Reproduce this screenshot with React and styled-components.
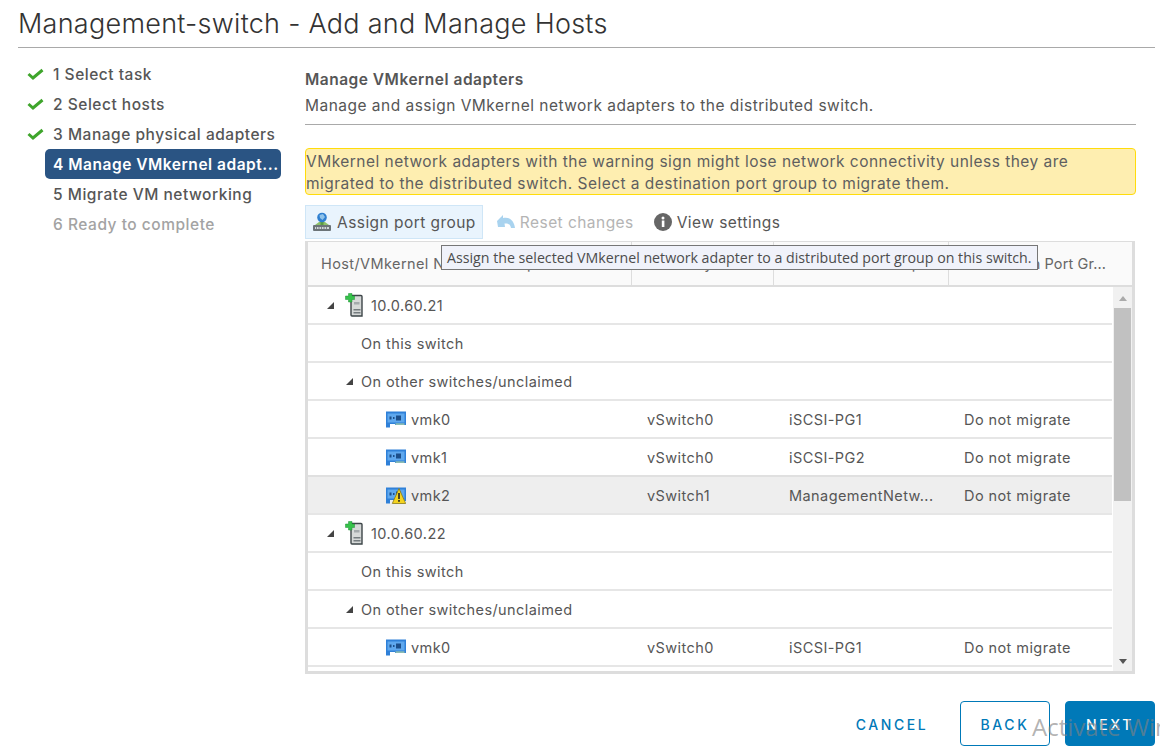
import React from "react";
import styled, { createGlobalStyle } from "styled-components";

const GlobalStyle = createGlobalStyle`
  html, body { margin: 0; padding: 0; background: #fff; }
  body { font-family: Inter, "Open Sans", sans-serif; color: #565656; }
  * { box-sizing: border-box; }
`;

const steps = [
  { label: "1 Select task", done: true },
  { label: "2 Select hosts", done: true },
  { label: "3 Manage physical adapters", done: true },
  { label: "4 Manage VMkernel adapt...", active: true },
  { label: "5 Migrate VM networking" },
  { label: "6 Ready to complete", disabled: true },
];

const rows = [
  { kind: "host", name: "10.0.60.21" },
  { kind: "group", name: "On this switch" },
  { kind: "group", name: "On other switches/unclaimed", open: true },
  { kind: "vmk", name: "vmk0", sw: "vSwitch0", pg: "iSCSI-PG1", dest: "Do not migrate" },
  { kind: "vmk", name: "vmk1", sw: "vSwitch0", pg: "iSCSI-PG2", dest: "Do not migrate" },
  { kind: "vmk", name: "vmk2", sw: "vSwitch1", pg: "ManagementNetw...", dest: "Do not migrate", warn: true },
  { kind: "host", name: "10.0.60.22" },
  { kind: "group", name: "On this switch" },
  { kind: "group", name: "On other switches/unclaimed", open: true },
  { kind: "vmk", name: "vmk0", sw: "vSwitch0", pg: "iSCSI-PG1", dest: "Do not migrate" },
];

const Page = styled.div`
  position: relative;
  width: 1160px;
  height: 752px;
  overflow: hidden;
  padding: 0 5px 0 18px;
`;

const Header = styled.h1`
  height: 48px;
  margin: 0;
  padding-top: 7px;
  border-bottom: 1px solid #a9a9a9;
  font-size: 27px;
  line-height: 34px;
  font-weight: 300;
  letter-spacing: 0.27px;
  color: #333;
`;

const Body = styled.div`
  display: flex;
  height: 627px;
`;

const Sidebar = styled.nav`
  width: 287px;
  padding: 11px 0 0 9px;
`;

const Step = styled.div`
  display: flex;
  align-items: center;
  height: 30px;
`;

const CheckSlot = styled.span`
  display: flex;
  width: 18px;
  color: #3fa52c;
`;

const StepLabel = styled.span`
  width: 236px;
  height: 30px;
  padding-left: 8px;
  border-radius: 5px;
  font-size: 15.5px;
  line-height: 31px;
  letter-spacing: 0.52px;
  white-space: nowrap;
  color: ${(p) => (p.$active ? "#fff" : p.$disabled ? "#a3a3a3" : "#565656")};
  background: ${(p) => (p.$active ? "#2a5483" : "transparent")};
  font-weight: ${(p) => (p.$active ? 600 : 500)};
`;

const Content = styled.main`
  width: 831px;
  padding-top: 21px;
`;

const Heading = styled.h2`
  margin: 0;
  font-size: 15.5px;
  line-height: 22px;
  font-weight: 600;
  letter-spacing: 0.5px;
  color: #565656;
`;

const Intro = styled.p`
  margin: 4px 0 0;
  padding-bottom: 7px;
  border-bottom: 1px solid #a9a9a9;
  font-size: 15.5px;
  line-height: 22px;
  letter-spacing: 0.48px;
  color: #565656;
`;

const Warning = styled.div`
  margin-top: 23px;
  height: 47px;
  padding: 2px 0 0 0;
  border: 1px solid #ffdc0b;
  border-radius: 4px;
  background: #feeeb0;
  font-size: 15.5px;
  line-height: 22px;
  letter-spacing: 0.47px;
  color: #5f5f5f;
`;

const Toolbar = styled.div`
  display: flex;
  align-items: center;
  margin-top: 10px;
  height: 34px;
`;

const ToolButton = styled.div`
  display: flex;
  align-items: center;
  gap: 5px;
  height: 34px;
  padding: 0 6px;
  border: 1px solid ${(p) => (p.$hover ? "#cfe6f7" : "transparent")};
  background: ${(p) => (p.$hover ? "#e9f4fd" : "transparent")};
  font-size: 15.5px;
  letter-spacing: 0.45px;
  color: ${(p) => (p.$disabled ? "#b4b4b4" : "#565656")};
  margin-right: ${(p) => (p.$hover ? "7px" : "6px")};
`;

const Table = styled.div`
  position: relative;
  height: 433px;
  border: 1px solid #ddd;
  border-left: 3px solid #ddd;
  border-right: 3px solid #ddd;
  border-bottom: 3px solid #ddd;
  margin-top: 2px;
  margin-right: 1px;
`;

const HeaderRow = styled.div`
  display: grid;
  grid-template-columns: 324px 142px 175px 1fr;
  height: 45px;
  background: #fafafa;
  border-bottom: 2px solid #ddd;
`;

const HeaderCell = styled.div`
  padding-left: 13px;
  border-right: 1px solid #ddd;
  font-size: 14.5px;
  line-height: 43px;
  letter-spacing: 0.4px;
  color: #666;
  white-space: nowrap;
  overflow: hidden;
  &:last-child {
    border-right: 0;
    letter-spacing: 0.12px;
  }
`;

const TableBody = styled.div`
  display: flex;
  height: 384px;
`;

const Rows = styled.div`
  flex: 1;
  overflow: hidden;
  margin-right: 1px;
`;

const Row = styled.div`
  display: grid;
  grid-template-columns: 324px 142px 175px 1fr;
  align-items: center;
  height: 38px;
  border-bottom: 2px solid #e6e6e6;
  background: ${(p) => (p.$selected ? "#eee" : "#fff")};
  box-shadow: ${(p) => (p.$selected ? "0 -2px 0 #e0e0e0" : "none")};
  font-size: 14.5px;
  letter-spacing: 0.42px;
  color: #565656;
  white-space: nowrap;
`;

const NameCell = styled.div`
  display: flex;
  align-items: center;
  padding-left: ${(p) => p.$indent}px;
`;

const Cell = styled.div`
  padding-left: 15px;
`;

const Twisty = styled.span`
  width: 0;
  height: 0;
  margin-right: ${(p) => p.$gap}px;
  border-style: solid;
  border-width: 0 0 7px 7px;
  border-color: transparent transparent #444 transparent;
`;

const Scrollbar = styled.div`
  display: flex;
  flex-direction: column;
  align-items: center;
  width: 19px;
  background: #f1f1f1;
`;

const ScrollArrow = styled.span`
  width: 0;
  height: 0;
  margin: 9px 0 7px;
  border-left: 4.5px solid transparent;
  border-right: 4.5px solid transparent;
  ${(p) => (p.$down ? "border-top: 5px solid #555;" : "border-bottom: 5px solid #aaa;")}
`;

const ScrollThumb = styled.div`
  width: 17px;
  height: 193px;
  background: #c1c1c1;
`;

const ScrollGap = styled.div`
  flex: 1;
`;

const Tooltip = styled.div`
  position: absolute;
  left: 133px;
  top: 3px;
  height: 25px;
  padding: 0 5px;
  border: 1px solid #767676;
  background: #f0f2fa;
  font-family: "Open Sans", sans-serif;
  font-size: 14.2px;
  line-height: 23px;
  color: #4c4c4c;
  white-space: nowrap;
`;

const Footer = styled.footer`
  display: flex;
  justify-content: flex-end;
  align-items: center;
  gap: 15px;
  padding-top: 26px;
`;

const FooterButton = styled.button`
  width: ${(p) => p.$width}px;
  height: 45px;
  padding: 2px 0 0;
  border: 1px solid ${(p) => (p.$plain ? "transparent" : "#0079b8")};
  border-radius: 4px;
  background: ${(p) => (p.$primary ? "#0079b8" : "#fff")};
  color: ${(p) => (p.$primary ? "#fff" : "#0079b8")};
  font-family: inherit;
  font-size: 14px;
  font-weight: 500;
  letter-spacing: 2.6px;
`;

const Watermark = styled.div`
  position: absolute;
  left: 1032px;
  top: 711px;
  font-family: "Open Sans", sans-serif;
  color: rgba(130, 130, 130, 0.62);
  white-space: nowrap;
  pointer-events: none;
`;

const WatermarkTitle = styled.div`
  font-size: 24px;
  line-height: 32px;
`;

const WatermarkHint = styled.div`
  font-size: 13px;
  line-height: 18px;
  padding-left: 2px;
  margin-top: 4px;
`;

const IconSlot = styled.span`
  display: flex;
  align-items: center;
  margin-right: ${(p) => p.$gap}px;
`;

const Check = () => (
  <svg width="17" height="12" viewBox="0 0 17 12">
    <path d="M1.5 6 L6 10 L15.5 2" fill="none" stroke="currentColor" strokeWidth="3" />
  </svg>
);

const PortGroupIcon = () => (
  <svg width="20" height="20" viewBox="0 0 20 20">
    <path d="M3 13 L7 10 H13 L17 13 Z" fill="#8cc06a" />
    <rect x="8.5" y="9" width="3" height="4" fill="#5a9a45" />
    <circle cx="10" cy="5.5" r="4.8" fill="#2f7fd0" />
    <path d="M7.5 3 L11 2 L13 5 L10.5 8 L8 6 Z" fill="#8fc3ea" />
    <rect x="1" y="13" width="18" height="6" rx="1" fill="#6b7478" />
    <rect x="3" y="15" width="14" height="2" fill="#cfd5d8" />
    <path d="M4.5 15 V17 M7 15 V17 M9.5 15 V17 M12 15 V17 M14.5 15 V17" stroke="#6b7478" strokeWidth="0.8" />
  </svg>
);

const ResetIcon = () => (
  <svg width="18" height="16" viewBox="0 0 18 16">
    <path d="M0 7 L6 1 V4 C12 2.5 17 6 18 14 H14 C13.5 10.5 11 9 7.5 9.5 L8 13 H1 Z" fill="#a9d3ef" />
  </svg>
);

const InfoIcon = () => (
  <svg width="18" height="18" viewBox="0 0 18 18">
    <circle cx="9" cy="9" r="9" fill="#666" />
    <rect x="7.8" y="7.5" width="2.6" height="6.5" fill="#fff" />
    <circle cx="9" cy="5" r="1.5" fill="#fff" />
  </svg>
);

const HostIcon = () => (
  <svg width="20" height="24" viewBox="0 0 20 24">
    <path d="M6 2.5 H16 A1 1 0 0 1 17 3.5 V23 H7 A1 1 0 0 1 6 22 Z" fill="#d6d9d8" stroke="#3d4548" strokeWidth="1.4" />
    <rect x="9" y="9" width="5.5" height="2.5" fill="#a4aaac" />
    <rect x="8.5" y="16" width="7" height="1.5" fill="#757c7f" />
    <rect x="8.5" y="19" width="7" height="1.5" fill="#757c7f" />
    <path d="M3.5 0.5 H7 V3 H9.5 V6.5 H7 V9 H3.5 V6.5 H0.5 V3 H3.5 Z" fill="#36c24a" stroke="#1f8f36" strokeWidth="0.5" />
  </svg>
);

const AdapterIcon = ({ warn }) => (
  <svg width="20" height="17" viewBox="0 0 20 17">
    <path d="M0 0.5 H20 V14 H9 V13 H4 V16.5 H0 Z" fill="#2f80d8" />
    <rect x="1.5" y="2.5" width="17" height="9" fill="#5fa8ee" />
    <rect x="3.5" y="5.5" width="2" height="3" fill="#1d4f8a" />
    <rect x="7" y="6" width="1.5" height="2" fill="#1d4f8a" />
    <rect x="10" y="4.5" width="5" height="5" fill="#1d4f8a" />
    <rect x="9.5" y="12.5" width="9" height="1.2" fill="#b6d8a4" />
    {warn && (
      <>
        <path d="M13 1.5 L19.7 16.5 H6.3 Z" fill="#f4d31f" stroke="#8a7a18" strokeWidth="0.8" />
        <rect x="12.2" y="6" width="1.6" height="6" fill="#222" />
        <rect x="12.2" y="13" width="1.6" height="1.8" fill="#222" />
      </>
    )}
  </svg>
);

const TreeRow = ({ row }) => {
  if (row.kind === "host") {
    return (
      <Row>
        <NameCell $indent={19}>
          <Twisty $gap={11} />
          <IconSlot $gap={6}><HostIcon /></IconSlot>
          {row.name}
        </NameCell>
      </Row>
    );
  }
  if (row.kind === "group") {
    return (
      <Row>
        <NameCell $indent={row.open ? 38 : 53}>
          {row.open && <Twisty $gap={8} />}
          {row.name}
        </NameCell>
      </Row>
    );
  }
  return (
    <Row $selected={row.warn}>
      <NameCell $indent={78}>
        <IconSlot $gap={5}><AdapterIcon warn={row.warn} /></IconSlot>
        {row.name}
      </NameCell>
      <Cell>{row.sw}</Cell>
      <Cell>{row.pg}</Cell>
      <Cell>{row.dest}</Cell>
    </Row>
  );
};

export default function App() {
  return (
    <Page>
      <GlobalStyle />
      <Header>Management-switch - Add and Manage Hosts</Header>
      <Body>
        <Sidebar>
          {steps.map((s) => (
            <Step key={s.label}>
              <CheckSlot>{s.done && <Check />}</CheckSlot>
              <StepLabel $active={s.active} $disabled={s.disabled}>{s.label}</StepLabel>
            </Step>
          ))}
        </Sidebar>
        <Content>
          <Heading>Manage VMkernel adapters</Heading>
          <Intro>Manage and assign VMkernel network adapters to the distributed switch.</Intro>
          <Warning>
            VMkernel network adapters with the warning sign might lose network connectivity unless they are
            <br />
            migrated to the distributed switch. Select a destination port group to migrate them.
          </Warning>
          <Toolbar>
            <ToolButton $hover><PortGroupIcon />Assign port group</ToolButton>
            <ToolButton $disabled><ResetIcon />Reset changes</ToolButton>
            <ToolButton><InfoIcon />View settings</ToolButton>
          </Toolbar>
          <Table>
            <HeaderRow>
              <HeaderCell>Host/VMkernel Network Adapters</HeaderCell>
              <HeaderCell>In Use by Switch</HeaderCell>
              <HeaderCell>Source Port Group</HeaderCell>
              <HeaderCell>Destination Port Gr...</HeaderCell>
            </HeaderRow>
            <TableBody>
              <Rows>
                {rows.map((r, i) => <TreeRow key={i} row={r} />)}
              </Rows>
              <Scrollbar>
                <ScrollArrow />
                <ScrollThumb />
                <ScrollGap />
                <ScrollArrow $down />
              </Scrollbar>
            </TableBody>
            <Tooltip>Assign the selected VMkernel network adapter to a distributed port group on this switch.</Tooltip>
          </Table>
        </Content>
      </Body>
      <Footer>
        <FooterButton $plain $width={106}>CANCEL</FooterButton>
        <FooterButton $width={90}>BACK</FooterButton>
        <FooterButton $primary $width={90}>NEXT</FooterButton>
      </Footer>
      <Watermark>
        <WatermarkTitle>Activate Windows</WatermarkTitle>
        <WatermarkHint>Go to Settings to activate Windows.</WatermarkHint>
      </Watermark>
    </Page>
  );
}
